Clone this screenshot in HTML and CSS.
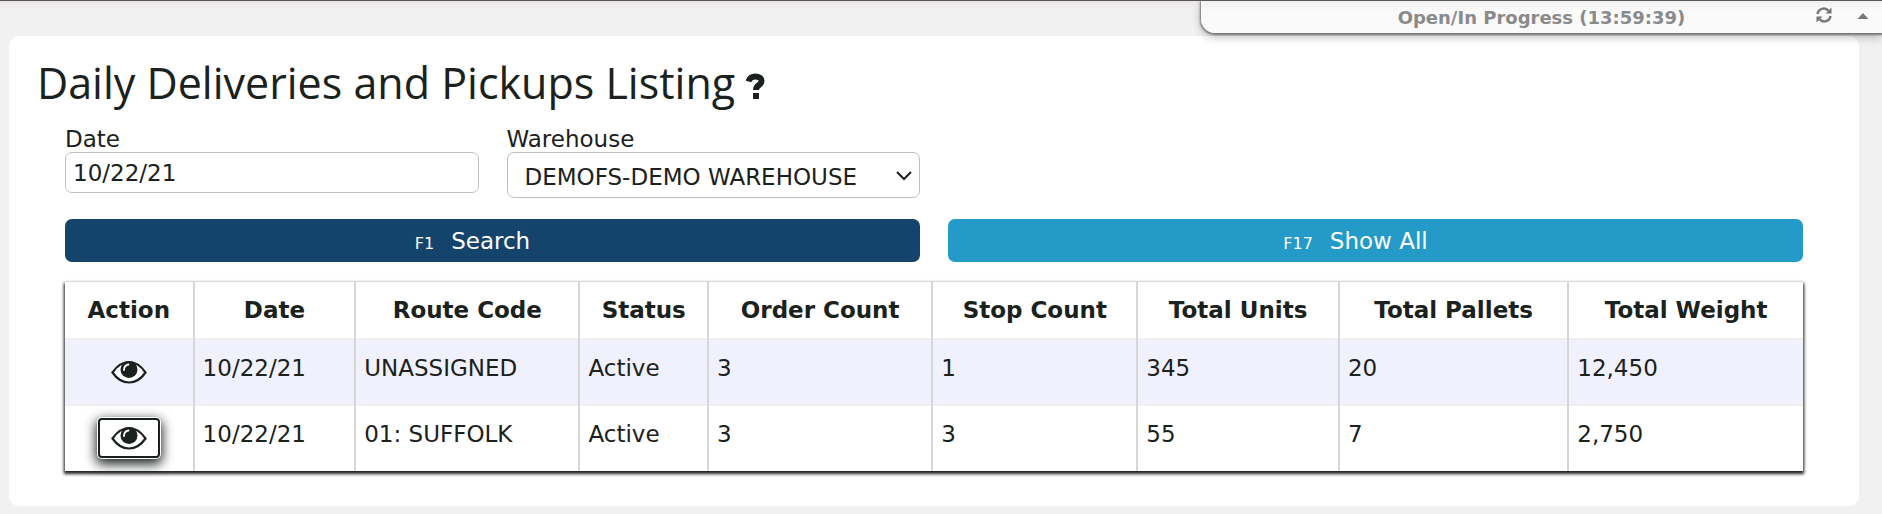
FILE: index.html
```
<!DOCTYPE html>
<html lang="en">
<head>
    <meta charset="utf-8">
    <title>Daily Deliveries and Pickups Listing</title>
    <link rel="stylesheet" href="styles.css">
</head>
<body>
    <!-- Eye icon shared by the row buttons -->
    <svg class="sprite" aria-hidden="true">
        <symbol id="eye" viewBox="0 0 36 24">
            <path d="M1.500 12.500C6 6 11.500 2 18 2s12 4 16.500 10.500C30 19 24.500 22.500 18 22.500S6 19 1.500 12.500z" fill="#fff" stroke="#1b211d" stroke-width="2.200"/>
            <circle cx="18" cy="9.500" r="8.500" fill="#1b211d"/>
            <path d="M13 10c0-3 1.500-5 4.500-5.500" fill="none" stroke="#fff" stroke-width="1.800" stroke-linecap="round"/>
        </symbol>
    </svg>

    <!-- Refresh status tab -->
    <div class="status-bar">
        <span class="status-text">Open/In Progress (13:59:39)</span>
        <div class="status-tools">
            <button class="icon-button" type="button" aria-label="Refresh">
                <svg width="16" height="16" viewBox="0 0 16 16" fill="none" stroke="currentColor" stroke-width="2.500">
                    <path d="M1.500 7A6.300 6.300 0 0 1 12.500 3.800M14.500 9A6.300 6.300 0 0 1 3.500 12.200"/>
                    <path d="M15.500 0.500v6h-6zM0.500 15.500v-6h6z" fill="currentColor" stroke="none"/>
                </svg>
            </button>
            <button class="icon-button" type="button" aria-label="Collapse">
                <svg width="12" height="16" viewBox="0 0 12 16" fill="currentColor">
                    <path d="M0.500 12l5.500-6 5.500 6z"/>
                </svg>
            </button>
        </div>
    </div>

    <div class="card">
        <h1>Daily Deliveries and Pickups Listing
            <button class="help" type="button" aria-label="Help">
                <svg width="19" height="26" viewBox="0 0 19 26">
                    <path d="M2.500 8.500C3.500 5 6 3.500 9.500 3.500c3.500 0 6 1.500 6 4.500 0 4.500-5.500 3.500-5.500 9" fill="none" stroke="currentColor" stroke-width="6"/>
                    <path d="M7 20h6v6H7z" fill="currentColor"/>
                </svg>
            </button>
        </h1>

        <div class="content">
            <div class="filters">
                <div class="field">
                    <label for="date">Date</label>
                    <input id="date" type="text" value="10/22/21">
                </div>
                <div class="field">
                    <label for="warehouse">Warehouse</label>
                    <div class="select-box">
                        <select id="warehouse">
                            <option>DEMOFS-DEMO WAREHOUSE</option>
                        </select>
                        <svg class="chevron" width="16" height="10" viewBox="0 0 16 10" fill="none" stroke="#1b211d" stroke-width="2">
                            <path d="M1 1l7 7 7-7"/>
                        </svg>
                    </div>
                </div>
            </div>

            <div class="actions">
                <button class="btn search" type="button"><small>F1</small>Search</button>
                <button class="btn show-all" type="button"><small>F17</small>Show All</button>
            </div>

            <table>
                <colgroup>
                    <col class="col-action">
                    <col class="col-date">
                    <col class="col-route">
                    <col class="col-status">
                    <col class="col-orders">
                    <col class="col-stops">
                    <col class="col-units">
                    <col class="col-pallets">
                    <col class="col-weight">
                </colgroup>
                <thead>
                    <tr>
                        <th>Action</th>
                        <th>Date</th>
                        <th>Route Code</th>
                        <th>Status</th>
                        <th>Order Count</th>
                        <th>Stop Count</th>
                        <th>Total Units</th>
                        <th>Total Pallets</th>
                        <th>Total Weight</th>
                    </tr>
                </thead>
                <tbody>
                    <tr>
                        <td class="action"><button class="view" type="button" aria-label="View"><svg width="36" height="24"><use href="#eye"/></svg></button></td>
                        <td>10/22/21</td>
                        <td>UNASSIGNED</td>
                        <td>Active</td>
                        <td>3</td>
                        <td>1</td>
                        <td>345</td>
                        <td>20</td>
                        <td>12,450</td>
                    </tr>
                    <tr>
                        <td class="action"><button class="view active" type="button" aria-label="View"><svg width="36" height="24"><use href="#eye"/></svg></button></td>
                        <td>10/22/21</td>
                        <td>01: SUFFOLK</td>
                        <td>Active</td>
                        <td>3</td>
                        <td>3</td>
                        <td>55</td>
                        <td>7</td>
                        <td>2,750</td>
                    </tr>
                </tbody>
            </table>
        </div>
    </div>
</body>
</html>
```
FILE: styles.css
```
* {
    box-sizing: border-box;
}
body {
    margin: 0;
    padding: 35px 23px 9px 9px;
    border-top: 1px solid #56545a;
    background: #f1f1f1 linear-gradient(#ebe6e8, #f1f1f1 10px) no-repeat;
    color: #1b211d;
    font-family: Verdana, "DejaVu Sans", sans-serif;
    font-size: 23px;
    line-height: 28px;
}
button, input, select {
    font: inherit;
    color: inherit;
}
button {
    cursor: pointer;
}
.sprite {
    display: none;
}

/* status tab pinned over the top right corner */
.status-bar {
    position: absolute;
    top: 1px;
    right: 0;
    width: 681px;
    height: 32px;
    padding-top: 2px;
    display: flex;
    align-items: center;
    justify-content: center;
    background: linear-gradient(#f3f0f1, #fafafa 10px);
    border-bottom-left-radius: 14px;
    box-shadow: 0 1px 2px 1px #777, 0 4px 10px rgba(0,0,0,0.25);
    color: #8a8a8a;
    font-size: 18px;
    font-weight: bold;
}
.status-tools {
    position: absolute;
    right: 13px;
    top: 6px;
    display: flex;
    gap: 25px;
}
.icon-button {
    display: flex;
    padding: 0;
    border: 0;
    background: none;
    color: #777;
}

.card {
    background-color: #fff;
    border-radius: 10px;
    padding: 14px 28px 35px;
}
h1 {
    margin: 0;
    font-family: "Segoe UI", "Open Sans", sans-serif;
    font-size: 43px;
    font-weight: 400;
    line-height: 66px;
}
.help {
    padding: 0;
    border: 0;
    background: none;
    line-height: 1;
}
.help svg {
    display: block;
}
.content {
    padding: 11px 28px 0;
}
.filters {
    display: grid;
    grid-template-columns: repeat(4, 1fr);
    gap: 28px;
    align-items: start;
}
.field label {
    display: block;
    line-height: 25px;
}
.field input, .field select {
    display: block;
    width: 100%;
    border: 1px solid #bfbfbf;
    border-radius: 7px;
    background-color: #fff;
}
.field input {
    height: 41px;
    padding: 0 7px;
}
.field select {
    height: 46px;
    padding: 3px 17px 0;
    appearance: none;
}
.select-box {
    position: relative;
}
.chevron {
    position: absolute;
    right: 8px;
    top: 19px;
    pointer-events: none;
}
.actions {
    display: grid;
    grid-template-columns: 1fr 1fr;
    gap: 28px;
    margin: 21px 0 20px;
}
.btn {
    height: 43px;
    padding: 3px 40px 0 0;
    border: 0;
    border-radius: 7px;
    color: #fff;
}
.btn small {
    margin-right: 17px;
    font-size: 16px;
}
.search {
    background-color: #14446b;
}
.show-all {
    background-color: #239ac8;
}

table {
    width: 100%;
    border-collapse: collapse;
    box-shadow: 0 2px 3px 1px #1b211d;
}
th, td {
    padding: 14px 8px;
    border-left: 2px solid #d6d6d6;
    border-top: 2px solid #efefef;
}
th {
    border-top: 0;
}
th:first-child, td:first-child {
    border-left: 0;
}
td {
    height: 66px;
    text-align: left;
    vertical-align: top;
}
tbody tr:nth-child(odd) {
    background-color: #f0f1fd;
}
td.action {
    padding: 12px 0 0;
    text-align: center;
}
.view {
    display: inline-flex;
    align-items: center;
    justify-content: center;
    width: 62px;
    height: 40px;
    padding: 0;
    border: 2px solid transparent;
    border-radius: 4px;
    background: none;
}
.view.active {
    border-color: #1b211d;
    background-color: #fff;
    box-shadow: 0 0 0 1px #fff, 0 4px 12px 2px #1b211d;
}
.col-action, .col-status { width: 7.4%; }
.col-date { width: 9.3%; }
.col-route, .col-orders { width: 12.9%; }
.col-stops { width: 11.8%; }
.col-units { width: 11.6%; }
.col-pallets { width: 13.2%; }
.col-weight { width: 13.5%; }
```
